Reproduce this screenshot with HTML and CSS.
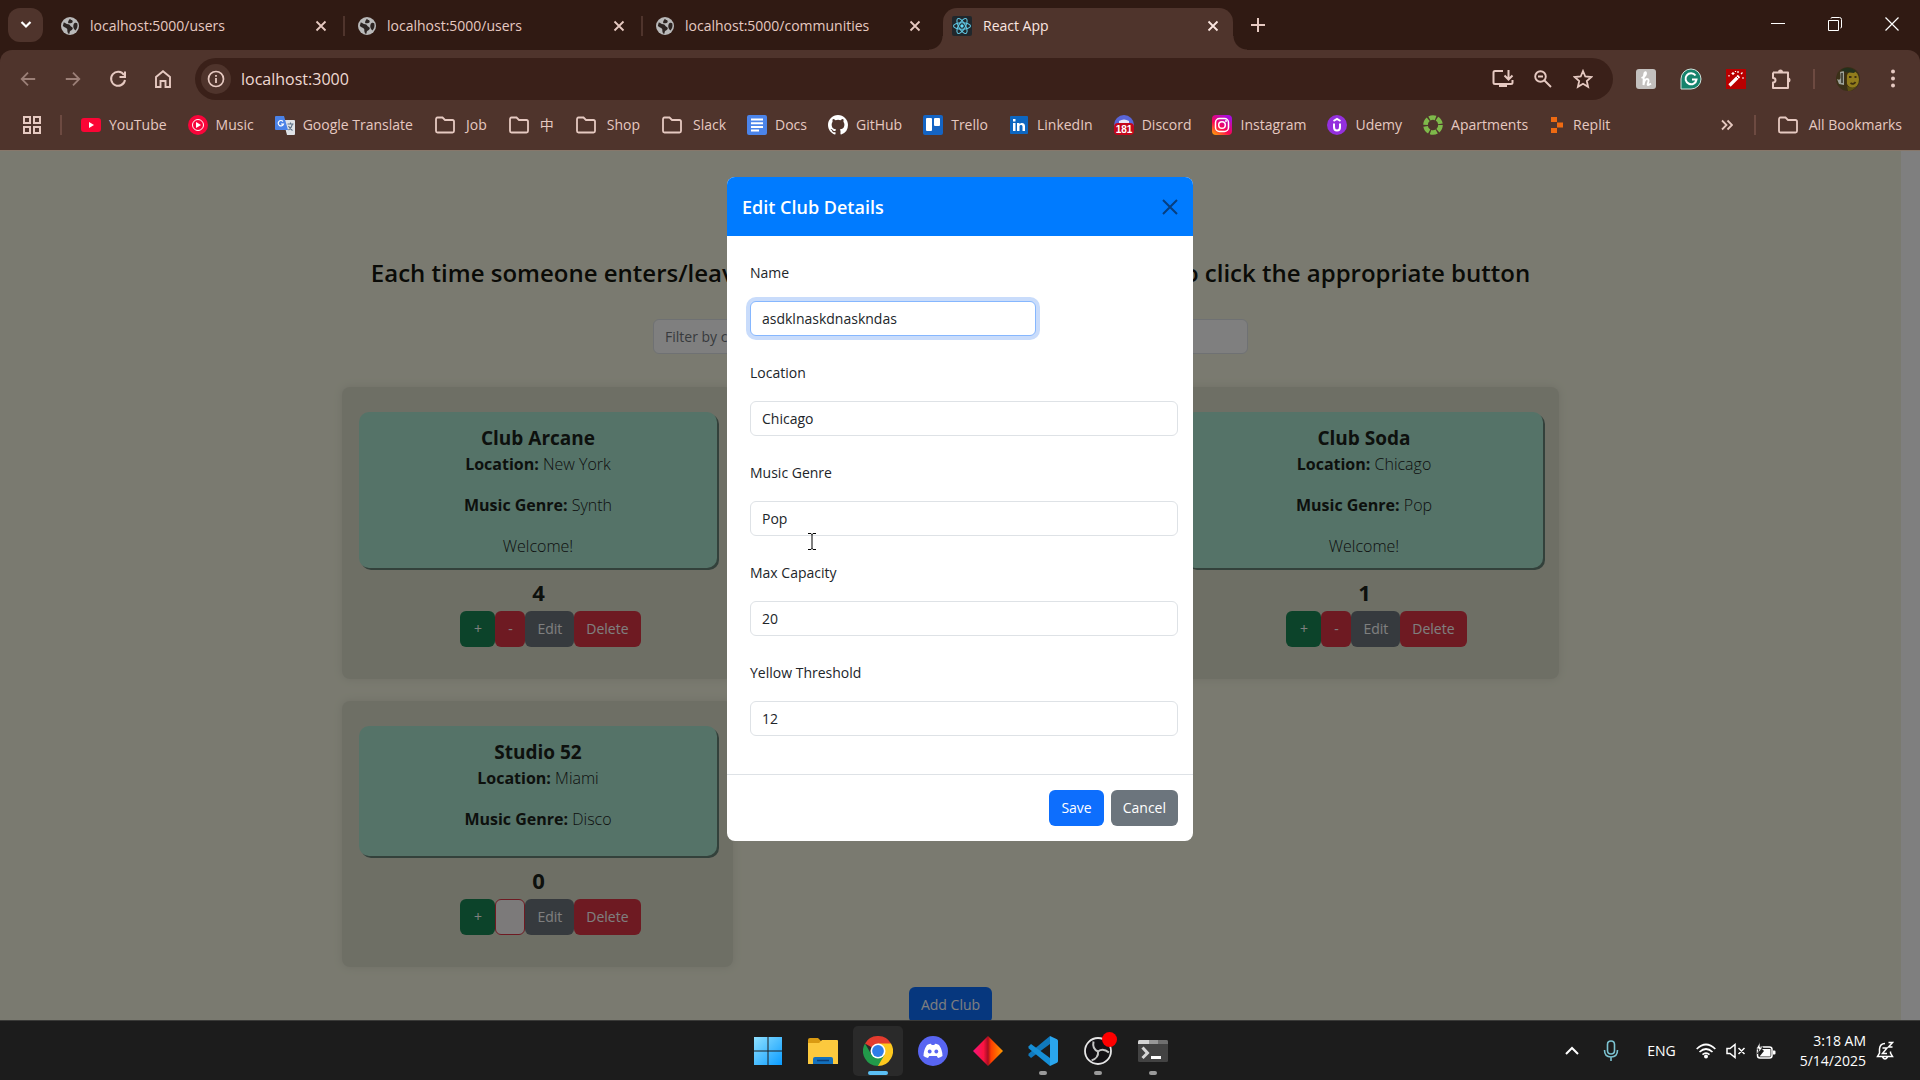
FILE: index.html
```html
<!DOCTYPE html>
<html lang="en">
<head>
<meta charset="utf-8">
<title>React App</title>
<link rel="stylesheet" href="styles.css">
</head>
<body>
<svg class="defs" aria-hidden="true">
  <symbol id="globe" viewBox="0 0 20 20"><circle cx="10" cy="10" r="10" fill="#b9b9b9"/><path d="M3 6c2 0 3 2 5 2s2 2 4 3 1 3-1 4-1 3-2 4c-2-1-2-3-2-5s-3-2-5-4zM10 2c1 2 3 1 3 3s-2 2-4 2-1-3 1-5zM14 8c1-2 3-2 4-1 1 3 0 6-2 8-2-2-3-4-2-7z" fill="#2c2422"/></symbol>
  <symbol id="close" viewBox="0 0 12 12"><path d="M1.500 1.500l9 9M10.500 1.500l-9 9" stroke="currentColor" stroke-width="1.800" fill="none"/></symbol>
  <symbol id="folder" viewBox="0 0 22 18"><path d="M2 3.500V15q0 1.500 1.500 1.500h15Q20 16.500 20 15V5.500Q20 4 18.500 4H11L8.500 1.500h-5Q2 1.500 2 3.500z" stroke="currentColor" stroke-width="1.800" fill="none"/></symbol>
  <symbol id="back" viewBox="0 0 20 20"><path d="M18 10H3M10 3l-7 7 7 7" stroke="currentColor" stroke-width="2" fill="none"/></symbol>
</svg>

<header class="browser">
  <div class="tabstrip">
    <button class="tab-search" aria-label="Search tabs"><svg width="12" height="10" viewBox="0 0 12 10"><path d="M1.500 2l4.500 4.500L10.500 2" stroke="currentColor" stroke-width="2.200" fill="none"/></svg></button>
    <div class="tab"><svg class="i18"><use href="#globe"/></svg><span>localhost:5000/users</span><button aria-label="Close tab"><svg class="i12"><use href="#close"/></svg></button></div>
    <div class="tab"><svg class="i18"><use href="#globe"/></svg><span>localhost:5000/users</span><button aria-label="Close tab"><svg class="i12"><use href="#close"/></svg></button></div>
    <div class="tab last"><svg class="i18"><use href="#globe"/></svg><span>localhost:5000/communities</span><button aria-label="Close tab"><svg class="i12"><use href="#close"/></svg></button></div>
    <div class="tab active"><svg class="i20" viewBox="0 0 20 20"><rect width="20" height="20" rx="2" fill="#20272c"/><g fill="none" stroke="#61c8e4" stroke-width="1.100"><ellipse cx="10" cy="10" rx="8.500" ry="3.300"/><ellipse cx="10" cy="10" rx="8.500" ry="3.300" transform="rotate(60 10 10)"/><ellipse cx="10" cy="10" rx="8.500" ry="3.300" transform="rotate(120 10 10)"/></g><circle cx="10" cy="10" r="1.700" fill="#61dafb"/></svg><span>React App</span><button aria-label="Close tab"><svg class="i12"><use href="#close"/></svg></button></div>
    <button class="new-tab" aria-label="New tab"><svg width="14" height="14" viewBox="0 0 14 14"><path d="M7 0v14M0 7h14" stroke="currentColor" stroke-width="2"/></svg></button>
    <div class="window-controls">
      <button aria-label="Minimize"><svg width="14" height="14" viewBox="0 0 14 14"><path d="M0 6.500h14" stroke="#fff"/></svg></button>
      <button aria-label="Restore"><svg width="14" height="14" viewBox="0 0 14 14"><path d="M.500 3.500h10v10H.500zM3 1.500Q3 .500 4 .500h7.500q2 0 2 2V10q0 1-1 1" stroke="#fff" fill="none"/></svg></button>
      <button aria-label="Close"><svg width="14" height="14" viewBox="0 0 14 14"><path d="M.500.500l13 13M13.500.500l-13 13" stroke="#fff" stroke-width="1.200"/></svg></button>
    </div>
  </div>

  <div class="toolbar">
    <nav class="nav-buttons">
      <button class="dim" aria-label="Back"><svg class="i18"><use href="#back"/></svg></button>
      <button class="dim" aria-label="Forward"><svg class="i18 flip"><use href="#back"/></svg></button>
      <button aria-label="Reload"><svg class="i18" viewBox="0 0 18 18"><path d="M15 5A7 7 0 1 0 16 10M16 1.500V7h-5.500" stroke="currentColor" stroke-width="2" fill="none"/></svg></button>
      <button aria-label="Home"><svg class="i18" viewBox="0 0 18 18"><path d="M2 7l7-5.800L16 7v10h-4.500v-6h-5v6H2z" stroke="currentColor" stroke-width="1.900" fill="none"/></svg></button>
    </nav>
    <div class="omnibox">
      <button class="site-info" aria-label="View site information"><svg class="i18" viewBox="0 0 18 18"><circle cx="9" cy="9" r="7.500" stroke="currentColor" stroke-width="1.700" fill="none"/><path d="M9 8v5M9 5v1.800" stroke="currentColor" stroke-width="1.800"/></svg></button>
      <input class="address" type="text" value="localhost:3000" aria-label="Address">
      <button aria-label="Install app"><svg width="22" height="20" viewBox="0 0 22 20"><path d="M11 2H3q-1.500 0-1.500 1.500v10Q1.500 15 3 15h16q1.500 0 1.500-1.500V11M16.500 1v9M12.500 6.500l4 4 4-4" stroke="currentColor" stroke-width="2" fill="none"/><path d="M7 15h8v3H7z" fill="currentColor"/></svg></button>
      <button aria-label="Zoom"><svg class="i18" viewBox="0 0 18 18"><circle cx="6.500" cy="6.500" r="5.300" stroke="currentColor" stroke-width="1.900" fill="none"/><path d="M10.500 10.500l6.500 6.500M4 6.500h5" stroke="currentColor" stroke-width="1.900"/></svg></button>
      <button aria-label="Bookmark this tab"><svg class="i20" viewBox="0 0 20 20"><path d="M10 2l2.300 5.500 6 .500-4.500 4 1.300 5.800L10 14.700l-5.100 3.100L6.200 12l-4.500-4 6-.500z" stroke="currentColor" stroke-width="1.800" fill="none"/></svg></button>
    </div>
    <div class="extensions">
      <button aria-label="Honey"><svg class="i22" viewBox="0 0 22 22"><rect x="1" y="1" width="20" height="20" rx="3" fill="#c3c0be"/><path d="M6.500 10Q11 8 11 5.500T9.500 5Q8.500 9 8.500 17q1-6 3.500-6t1 4 3 .500" stroke="#fff" stroke-width="1.900" fill="none"/></svg></button>
      <button aria-label="Grammarly"><svg class="i22" viewBox="0 0 22 22"><path d="M1 21V11A10 10 0 1 1 11 21z" fill="#15836c" stroke="#cfe3dc" stroke-width="1"/><path d="M15.500 7.500A5.500 5.500 0 1 0 16.500 11.500h-4.500" stroke="#fff" stroke-width="2" fill="none"/></svg></button>
      <button aria-label="Magic wand"><svg class="i22" viewBox="0 0 22 22"><path d="M1 1h20v20H1z" fill="#b90000"/><path d="M4.500 17.500l9.500-9.500" stroke="#fff" stroke-width="3.200"/><path d="M11.500 8.500l2 2" stroke="#b90000"/><path d="M8 4v3M6.500 5.500h3M13 3v2M17.500 4.500L16 6M17 10h2M4 7v1.500M10.500 3v1" stroke="#fff" stroke-width="1.200"/></svg></button>
      <button aria-label="Extensions"><svg class="i22" viewBox="0 0 22 22"><path d="M3 4.500h15V10M18 14v6H3v-5.500q2.500-.200 2.500-2.300T3 10V4.500" stroke="currentColor" stroke-width="2" fill="none" stroke-linejoin="round"/><path d="M8 4a2.500 2.500 0 0 1 5 0zM18 9.500a2.500 2.500 0 0 1 0 5z" fill="currentColor"/><path d="M18 9v6" stroke="currentColor" stroke-width="2"/></svg></button>
      <i class="rule"></i>
      <button aria-label="Profile"><svg class="i24" viewBox="0 0 24 24"><circle cx="12" cy="12" r="12" fill="#3b3018"/><path d="M4 5l4-1v14l-5-1-2-5q5 3 3-7z" fill="#9ea39a"/><path d="M6 6v10" stroke="#2c2c22" stroke-width="1.500"/><ellipse cx="16.500" cy="12.500" rx="6.500" ry="8.500" fill="#917c1c"/><path d="M5 3q7-5 15 1l-2 2-9-1z" fill="#24301c"/><path d="M13 10h2.500M18.500 10h2M14.500 16q3 2 5-1M10 6v13" stroke="#3e3010" stroke-width="1.800" fill="none"/><path d="M11 19q5 3 10 0-4 5-9 5z" fill="#5d5012"/></svg></button>
      <button aria-label="Menu"><svg class="i22" viewBox="0 0 22 22"><g fill="currentColor"><circle cx="11" cy="3.500" r="2"/><circle cx="11" cy="10.500" r="2"/><circle cx="11" cy="17.500" r="2"/></g></svg></button>
    </div>
  </div>

  <nav class="bookmarks">
    <button aria-label="Tab groups"><svg class="i18" viewBox="0 0 18 18"><path d="M1 1h6v6H1zM11 1h6v6h-6zM1 11h6v6H1zM11 11h6v6h-6z" stroke="currentColor" stroke-width="2" fill="none"/></svg></button>
    <i class="rule"></i>
    <div class="bookmark-list">
    <a href="#"><svg class="i20" viewBox="0 0 20 20"><rect y="3" width="20" height="14" rx="3" fill="#fb0535"/><path d="M8 7l5 3-5 3z" fill="#fff"/></svg>YouTube</a>
    <a href="#"><svg class="i20" viewBox="0 0 20 20"><circle cx="10" cy="10" r="10" fill="#f8053a"/><circle cx="10" cy="10" r="5.500" stroke="#fff" fill="none"/><path d="M8 7l5 3-5 3z" fill="#fff"/></svg>Music</a>
    <a href="#"><svg class="i20" viewBox="0 0 20 20"><path d="M8 5h11q1 0 1 1v13q0 1-1 1h-7z" fill="#dfe2e7"/><path d="M1 1h8l4 14H1q-1 0-1-1V2q0-1 1-1z" fill="#4a82e8"/><path d="M8 6.500A2.700 2.700 0 1 0 8.500 9H6" stroke="#fff" stroke-width="1.200" fill="none"/><path d="M12.500 9h6M15.500 7.500V9M17.500 9q-1 4-4 6M13.500 11q1.500 3 4 4.500" stroke="#5d7186" stroke-width="1.100" fill="none"/></svg>Google Translate</a>
    <a class="folder" href="#"><svg class="i22"><use href="#folder"/></svg>Job</a>
    <a class="folder" href="#"><svg class="i22"><use href="#folder"/></svg>中</a>
    <a class="folder" href="#"><svg class="i22"><use href="#folder"/></svg>Shop</a>
    <a class="folder" href="#"><svg class="i22"><use href="#folder"/></svg>Slack</a>
    <a href="#"><svg class="i20" viewBox="0 0 20 20"><rect width="20" height="20" rx="2" fill="#4b84ea"/><path d="M4 4.500h12M4 8.200h12M4 12h12M4 15.500h8" stroke="#fff" stroke-width="2"/></svg>Docs</a>
    <a href="#"><svg class="i20" viewBox="0 0 16 16"><path fill="#fff" d="M8 0C3.580 0 0 3.580 0 8c0 3.540 2.290 6.530 5.470 7.590.4.070.55-.17.55-.38 0-.19-.01-.82-.01-1.490-2.010.37-2.530-.49-2.690-.94-.09-.23-.48-.94-.82-1.130-.28-.15-.68-.52-.01-.53.63-.01 1.080.58 1.230.82.72 1.210 1.870.87 2.330.66.07-.52.28-.87.51-1.070-1.780-.2-3.640-.89-3.640-3.950 0-.87.31-1.590.82-2.150-.08-.2-.36-1.020.08-2.120 0 0 .67-.21 2.200.82a7.600 7.600 0 0 1 4 0c1.530-1.040 2.200-.82 2.200-.82.44 1.100.16 1.920.08 2.120.51.56.82 1.270.82 2.150 0 3.070-1.870 3.750-3.650 3.950.29.25.54.73.54 1.480 0 1.070-.01 1.930-.01 2.200 0 .21.15.46.55.38A8.010 8.010 0 0 0 16 8c0-4.420-3.580-8-8-8z"/></svg>GitHub</a>
    <a href="#"><svg class="i20" viewBox="0 0 20 20"><rect width="20" height="20" rx="2" fill="#1464c4"/><rect x="3" y="3" width="6" height="13" rx="1" fill="#fff"/><rect x="11" y="3" width="6" height="8" rx="1" fill="#fff"/></svg>Trello</a>
    <a href="#"><svg class="i20" viewBox="0 0 20 20"><rect x="1" y="1" width="18" height="18" rx="1" fill="#0d66c0"/><path d="M4 8h2.500v8H4zM4 4h2.500v2.500H4zM8 8h2.500v1.300C12 7 16 7.500 16 11v5h-2.500v-4.500c0-2-3-2-3 0V16H8z" fill="#fff"/></svg>LinkedIn</a>
    <a href="#"><svg class="i20" viewBox="0 0 20 20"><circle cx="10" cy="10" r="10" fill="#5965d8"/><path d="M5 6q5-3 10 0v4H5z" fill="#e9e7f5"/><rect y="8" width="20" height="12" rx="4" fill="#c4061b"/><text x="10" y="18" class="count-badge">181</text></svg>Discord</a>
    <a href="#"><svg class="i20" viewBox="0 0 20 20"><defs><linearGradient id="ig" x1="0" y1="1" x2=".7" y2="0"><stop offset="0" stop-color="#ffb400"/><stop offset=".45" stop-color="#fb0550"/><stop offset="1" stop-color="#a90dde"/></linearGradient></defs><rect width="20" height="20" rx="4" fill="url(#ig)"/><rect x="3.500" y="3.500" width="13" height="13" rx="4" stroke="#fff" stroke-width="1.500" fill="none"/><circle cx="10" cy="10" r="3.300" stroke="#fff" stroke-width="1.500" fill="none"/><circle cx="14" cy="6" r="1" fill="#fff"/></svg>Instagram</a>
    <a href="#"><svg class="i20" viewBox="0 0 20 20"><circle cx="10" cy="10" r="10" fill="#9430dd"/><path d="M6.500 6L10 4l3.500 2M7 8.500V12q0 3.500 3 3.500t3-3.500V8.500" stroke="#fff" stroke-width="2" fill="none"/></svg>Udemy</a>
    <a href="#"><svg class="i20" viewBox="0 0 20 20"><circle cx="10" cy="10" r="7.500" stroke="#7eb94a" stroke-width="4.600" stroke-dasharray="6.400 1.450" fill="none"/></svg>Apartments</a>
    <a href="#"><svg class="i16" viewBox="0 0 16 20"><path d="M2 2h6v5H2zM8 7.500h6v5H8zM2 13h6v5H2z" fill="#ef6a12"/></svg>Replit</a>
    </div>
    <div class="bookmarks-end">
      <button aria-label="More bookmarks"><svg class="i12" viewBox="0 0 12 12"><path d="M1 1.500L5.500 6 1 10.500M6.500 1.500L11 6l-4.500 4.500" stroke="currentColor" stroke-width="1.800" fill="none"/></svg></button>
      <i class="rule"></i>
      <a class="folder" href="#"><svg class="i22"><use href="#folder"/></svg>All Bookmarks</a>
    </div>
  </nav>
</header>

<div class="viewport">
  <main class="page">
    <h1>Each time someone enters/leaves one of the clubs, please remember to click the appropriate button</h1>
    <input class="field filter" type="text" placeholder="Filter by club name" aria-label="Filter clubs">
    <div class="clubs">
      <section class="club">
        <div class="info"><h2>Club Arcane</h2><p><b>Location:</b> New York</p><p><b>Music Genre:</b> Synth</p><p>Welcome!</p></div>
        <div class="count">4</div>
        <div class="actions"><button class="btn green">+</button><button class="btn red">-</button><button class="btn gray">Edit</button><button class="btn red">Delete</button></div>
      </section>
      <section class="club third">
        <div class="info"><h2>Club Soda</h2><p><b>Location:</b> Chicago</p><p><b>Music Genre:</b> Pop</p><p>Welcome!</p></div>
        <div class="count">1</div>
        <div class="actions"><button class="btn green">+</button><button class="btn red">-</button><button class="btn gray">Edit</button><button class="btn red">Delete</button></div>
      </section>
      <section class="club">
        <div class="info"><h2>Studio 52</h2><p><b>Location:</b> Miami</p><p><b>Music Genre:</b> Disco</p></div>
        <div class="count">0</div>
        <div class="actions"><button class="btn green">+</button><button class="btn blank" aria-label="Remove one"></button><button class="btn gray">Edit</button><button class="btn red">Delete</button></div>
      </section>
    </div>
    <button class="btn blue">Add Club</button>
  </main>
  <div class="scrollbar"></div>

  <div class="backdrop">
    <form class="modal" role="dialog" aria-labelledby="modal-title">
      <header class="modal-header"><h2 id="modal-title">Edit Club Details</h2><button type="button" aria-label="Close"><svg class="i16" viewBox="0 0 16 16"><path d="M1 1l14 14M15 1L1 15" stroke="#063f80" stroke-width="2"/></svg></button></header>
      <div class="modal-body">
        <label for="name">Name</label><input id="name" class="field focused" type="text" value="asdklnaskdnaskndas">
        <label for="location">Location</label><input id="location" class="field" type="text" value="Chicago">
        <label for="genre">Music Genre</label><input id="genre" class="field" type="text" value="Pop">
        <label for="capacity">Max Capacity</label><input id="capacity" class="field" type="text" value="20">
        <label for="threshold">Yellow Threshold</label><input id="threshold" class="field" type="text" value="12">
      </div>
      <footer class="modal-footer"><button type="button" class="btn blue">Save</button><button type="button" class="btn gray">Cancel</button></footer>
    </form>
  </div>
  <svg class="cursor" width="8" height="17" viewBox="0 0 8 17"><path d="M0 .500h3l1 1 1-1h3M0 16.500h3l1-1 1 1h3M4 1v15" stroke="#000" fill="none"/></svg>
</div>

<footer class="taskbar">
  <div class="apps">
    <button aria-label="Start"><svg class="i30" viewBox="0 0 30 30"><defs><linearGradient id="win" x2="1" y2="1"><stop stop-color="#8fe0ff"/><stop offset="1" stop-color="#0a9cff"/></linearGradient></defs><path d="M1 1h13.500v13.500H1zM15.500 1H29v13.500H15.500zM1 15.500h13.500V29H1zM15.500 15.500H29V29H15.500z" fill="url(#win)"/></svg></button>
    <button aria-label="File Explorer"><svg class="i30" viewBox="0 0 30 30"><path d="M0 4q0-2 2-2h8l3 3v6H0z" fill="#d99a12"/><path d="M0 7h11l3-3h15q1 0 1 1v23H0z" fill="#fcc93e"/><path d="M5 28v-5q0-2 2-2h16q2 0 2 2v5z" fill="#1370bd"/><path d="M9 24.500h12" stroke="#0b3d76" stroke-width="1.500"/></svg></button>
    <button class="current" aria-label="Chrome"><svg class="i30" viewBox="0 0 30 30"><path d="M15 15L2 7.500A15 15 0 0 1 28 7.500z" fill="#e33b2e"/><path d="M15 15V7.500h13A15 15 0 0 1 15 30z" fill="#fdc81e"/><path d="M2 7.500A15 15 0 0 0 15 30l6.500-11.200H8.500z" fill="#229a4a"/><circle cx="15" cy="15" r="7.500" fill="#fff"/><circle cx="15" cy="15" r="5.900" fill="#2f7de8"/></svg><i class="bar"></i></button>
    <button aria-label="Discord"><svg class="i30" viewBox="0 0 30 30"><circle cx="15" cy="15" r="15" fill="#5865f2"/><path d="M9 9q2.500-1.200 4-1.200l.700 1.200h2.600l.700-1.200q1.500 0 4 1.200 3.500 5 3.500 11-2 1.500-4.500 2l-1.200-2h-7.600l-1.200 2q-2.500-.500-4.500-2Q5.500 14 9 9z" fill="#fff"/><circle cx="11.700" cy="15.500" r="1.900" fill="#5865f2"/><circle cx="18.300" cy="15.500" r="1.900" fill="#5865f2"/></svg></button>
    <button aria-label="Diamond app"><svg class="i30" viewBox="0 0 30 30"><defs><linearGradient id="dia"><stop stop-color="#f5147d"/><stop offset=".35" stop-color="#fb1440"/><stop offset=".5" stop-color="#a80d22"/><stop offset=".6" stop-color="#ff3d00"/><stop offset="1" stop-color="#ff9a00"/></linearGradient></defs><path d="M15 0l15 15-15 15L0 15z" fill="url(#dia)"/></svg></button>
    <button aria-label="Visual Studio Code"><svg class="i30" viewBox="0 0 30 30"><path d="M22 8L3 22l-2.500-2.500v-1.800L22 0z" fill="#1079bd"/><path d="M22 22L3 8 .500 10.500v1.800L22 30z" fill="#168fd6"/><path d="M22 0l7 3.300q1 .500 1 1.700v20q0 1.200-1 1.700L22 30z" fill="#2aa6ee"/></svg><i class="dot"></i></button>
    <button aria-label="OBS Studio"><svg class="i30" viewBox="0 0 30 30"><circle cx="15" cy="15" r="13" fill="#131115" stroke="#e6e6e6" stroke-width="1.800"/><g fill="none" stroke="#c4c4c4" stroke-width="2"><path d="M15 15.500Q9 13 10.500 5.500"/><path d="M15 15.500Q9 13 10.500 5.500" transform="rotate(120 15 15.500)"/><path d="M15 15.500Q9 13 10.500 5.500" transform="rotate(240 15 15.500)"/></g></svg><i class="dot"></i><i class="badge"></i></button>
    <button aria-label="Terminal"><svg class="i30" viewBox="0 0 30 30"><rect y="4" width="30" height="22" rx="1.500" fill="#434343"/><path d="M0 8V5.500Q0 4 1.500 4H11v4z" fill="#d5d5d5"/><path d="M11 4h9v4h-9z" fill="#989898"/><path d="M20 4h8.500q1.500 0 1.500 1.500V8H20z" fill="#6f6f6f"/><path d="M4.500 11.500L9.500 17l-5 5" stroke="#d6d6d6" stroke-width="3" fill="none"/><path d="M13 21.500h10" stroke="#fff" stroke-width="3"/></svg><i class="dot"></i></button>
  </div>
  <div class="tray">
    <svg width="14" height="10" viewBox="0 0 14 10"><path d="M1 8l6-6 6 6" stroke="#fff" stroke-width="2" fill="none"/></svg>
    <svg class="mic" width="16" height="22" viewBox="0 0 16 22"><path d="M8 1q3.500 0 3.500 3.500v6q0 3.500-3.500 3.500t-3.500-3.500v-6Q4.500 1 8 1zM1.500 10q0 7 6.500 7t6.500-7M8 17v4" stroke="#7cc3d1" stroke-width="1.600" fill="none"/></svg>
    <span class="lang">ENG</span>
    <div class="status">
      <svg width="20" height="16" viewBox="0 0 20 16"><g stroke="#fff" stroke-width="1.700" fill="none"><path d="M.700 6q9.300-9 18.600 0M3.500 9q6.500-6 13 0M6.500 11.700q3.500-3 7 0"/></g><circle cx="10" cy="13.500" r="2" fill="#fff"/></svg>
      <svg width="20" height="16" viewBox="0 0 20 16"><path d="M1 5.500h3L9 1.500v13L4 10.500H1zM12.500 5l6 6M18.500 5l-6 6" stroke="#fff" stroke-width="1.500" fill="none"/></svg>
      <svg width="20" height="18" viewBox="0 0 20 18"><rect x="1.500" y="5" width="14.500" height="11" rx="2.500" stroke="#fff" stroke-width="1.500" fill="none"/><path d="M6 7h8.500v7.500H3.500L8 9zM17 8.500h1.500q1 0 1 1v2q0 1-1 1H17z" fill="#fff"/><path d="M4 0L0 7h3L1.500 12 7 5H4z" fill="#fff" stroke="#1c1c1c" stroke-width=".8"/></svg>
    </div>
    <div class="clock"><span>3:18 AM</span><span>5/14/2025</span></div>
    <svg width="18" height="20" viewBox="0 0 18 20"><path d="M9 2.500q-5 0-5.500 5.500v4L1.500 15.500h15l-2-3.500v-1.500M6.500 16q2.500 4 5 0" stroke="#fff" stroke-width="1.500" fill="none"/><path d="M6.500 7h4.500l-4.500 5.500H11M12.500 1.500h4L12.500 6h4" stroke="#fff" stroke-width="1.500" fill="none"/></svg>
  </div>
</footer>
</body>
</html>
```
FILE: styles.css
```css
* { box-sizing: border-box; margin: 0; padding: 0; }

body {
  display: flex;
  flex-direction: column;
  height: 100vh;
  overflow: hidden;
  font: 14px/24px "Open Sans", "Noto Sans CJK SC", sans-serif;
  color: #212529;
}

button, input { font: inherit; color: inherit; border: 0; background: none; }
button { display: flex; align-items: center; justify-content: center; flex: none; }
a { color: inherit; text-decoration: none; }
svg { display: block; flex: none; }

.defs { position: absolute; width: 0; height: 0; }
.i12 { width: 12px; height: 12px; }
.i16 { width: 16px; height: 20px; }
.i18 { width: 18px; height: 18px; }
.i20 { width: 20px; height: 20px; }
.i22 { width: 22px; height: 22px; }
.i24 { width: 24px; height: 24px; }
.i30 { width: 30px; height: 30px; }
.flip { transform: scaleX(-1); }

/* Browser chrome */
.browser { flex: none; background: #301a13; color: #e6c9c1; }
.tabstrip { display: flex; height: 50px; padding-left: 8px; }
.tab-search { width: 35px; height: 34px; margin-top: 8px; border-radius: 12px; background: #4f342c; color: #fff; }
.tab { position: relative; display: flex; align-items: center; gap: 11px; width: 298px; height: 34px; margin-top: 9px; padding: 0 16px 0 15px; }
.tab span { flex: 1; white-space: nowrap; }
.tab::after { content: ""; position: absolute; right: -2px; top: 7px; width: 2px; height: 20px; background: #4f342c; }
.tab-search + .tab { width: 300px; padding-left: 18px; }
.tab.last { width: 302px; padding-right: 22px; }
.tab.last::after { display: none; }
.tab.active { width: 290px; height: 42px; margin-top: 8px; padding: 0 14px 6px 9px; gap: 11px; border-radius: 14px 14px 0 0; background: #4f342c; color: #fbe6e0; }
.tab.active::before, .tab.active::after { content: ""; position: absolute; top: auto; bottom: 0; width: 14px; height: 14px; }
.tab.active::before { left: -14px; background: radial-gradient(circle at 0 0, #301a13 13px, #4f342c 14px); }
.tab.active::after { right: -14px; background: radial-gradient(circle at 100% 0, #301a13 13px, #4f342c 14px); }
.new-tab { width: 50px; height: 34px; margin-top: 8px; }
.window-controls { display: flex; margin-left: auto; }
.window-controls button { width: 57px; height: 48px; }
.toolbar { display: flex; align-items: center; height: 58px; padding: 0 5px; border-radius: 12px 12px 0 0; background: #4f342c; }
.nav-buttons { display: flex; }
.nav-buttons button { width: 45px; height: 40px; }
.dim { opacity: .5; }
.omnibox { display: flex; align-items: center; flex: 1; height: 42px; margin-left: 10px; padding: 0 10px 0 6px; border-radius: 21px; background: #3a2019; }
.omnibox button { width: 40px; height: 30px; }
.omnibox .site-info { width: 30px; border-radius: 15px; background: #4f342c; }
.address { flex: 1; padding: 0 10px; font-size: 16px; color: #f0dad3; }
.extensions { display: flex; align-items: center; margin-left: 10px; }
.extensions button { width: 45px; height: 30px; }
.extensions .rule { margin: 0 10px; }
.rule { flex: none; width: 2px; height: 20px; background: #6d4a41; }
.bookmarks { display: flex; align-items: center; gap: 19px; height: 43px; padding: 0 18px 9px 23px; border-bottom: 1px solid #87776a; background: #4f342c; }
.bookmark-list { display: flex; gap: 21px; }
.bookmarks a { display: flex; align-items: center; gap: 8px; white-space: nowrap; line-height: 20px; }
.bookmarks .folder { gap: 10px; }
.bookmarks-end { display: flex; align-items: center; gap: 21px; margin-left: auto; }
.count-badge { font: bold 10px "Liberation Sans", sans-serif; fill: #fff; text-anchor: middle; }

/* Page */
.viewport { position: relative; display: flex; flex: 1; min-height: 0; overflow: hidden; }
.page { display: flex; flex-direction: column; align-items: center; flex: 1; min-width: 0; padding-top: 104px; background: #f4f5e0; }
.page h1 { font-size: 24px; line-height: 36px; font-weight: 600; color: #14160f; white-space: nowrap; }
.scrollbar { width: 19px; background: #fff; }
.field { height: 35px; padding: 0 11px; border: 1px solid #dee2e6; border-radius: 6px; background: #fff; }
.field::placeholder { color: #70757a; }
.filter { width: 595px; flex: none; margin: 28px 0 33px; }
.clubs { display: grid; grid-template-columns: repeat(3, 391px); gap: 22px; margin-bottom: 20px; }
.club { padding: 25px 15px 32px 17px; border-radius: 8px; background: #dddecb; box-shadow: 0 0 8px #dddecb; text-align: center; font-size: 16px; color: #1b221b; }
.third { grid-column: 3; }
.info { min-height: 130px; padding: 12px 10px 9px; margin-right: 1px; border-radius: 10px; background: #aae6d0; box-shadow: 2px 2px 0 #678277; }
.info h2 { font-size: 19px; line-height: 28px; font-weight: 700; }
.info p { line-height: 25px; margin-bottom: 16px; font-weight: 300; }
.info p:last-child { margin-bottom: 0; }
.info b { font-weight: 700; }
.count { margin-top: 8px; font-size: 22px; line-height: 32px; font-weight: 700; }
.actions { display: flex; justify-content: center; padding: 3px 0 0 24px; }
.btn { min-width: 30px; height: 36px; padding: 0 11px; border: 1px solid transparent; border-radius: 6px; font-size: 14px; color: #fff; }
.green { min-width: 35px; background: #198754; }
.red { background: #dc3545; }
.gray { background: #6c757d; }
.blue { background: #0d6efd; }
.blank { background: #f8f4f4; border-color: #dc3545; }

/* Modal */
.backdrop { position: absolute; inset: 0; display: flex; justify-content: center; align-items: flex-start; padding-top: 26px; background: rgba(0, 0, 0, .5); }
.modal { width: 466px; border-radius: 8px; overflow: hidden; background: #fff; }
.modal-header { display: flex; align-items: center; justify-content: space-between; height: 59px; padding: 0 15px; background: #007bff; color: #fff; }
.modal-header h2 { font-size: 18px; font-weight: 600; }
.modal-body { display: flex; flex-direction: column; padding: 25px 15px 13px 23px; border-bottom: 1px solid #dee2e6; }
.modal-body label { align-self: flex-start; margin-bottom: 16px; }
.modal-body .field { margin-bottom: 25px; }
.modal-body .focused { width: 286px; border-color: #86b7fe; box-shadow: 0 0 0 4px #c9dcfb; }
.modal-footer { display: flex; justify-content: flex-end; gap: 7px; padding: 15px; }
.cursor { position: absolute; left: 808px; top: 382px; }

/* Taskbar */
.taskbar { display: grid; grid-template-columns: 1fr auto 1fr; align-items: center; flex: none; height: 60px; border-top: 1px solid #3a3a38; background: #1c1c1c; color: #fff; }
.apps { grid-column: 2; display: flex; gap: 5px; }
.apps button { position: relative; width: 50px; height: 50px; border-radius: 5px; }
.apps .current { background: #2a2a2a; }
.bar, .dot, .badge { position: absolute; border-radius: 4px; }
.bar { bottom: 1px; width: 20px; height: 4px; background: #5bc0f5; }
.dot { bottom: 1px; width: 8px; height: 4px; background: #9a9a9a; }
.badge { top: 6px; right: 6px; width: 15px; height: 15px; border-radius: 8px; background: #f00; }
.tray { display: flex; align-items: center; justify-content: flex-end; padding-right: 26px; }
.mic { margin: 0 28px 0 24px; }
.lang { margin-right: 20px; }
.status { display: flex; align-items: center; gap: 10px; margin-right: 24px; }
.clock { display: flex; flex-direction: column; align-items: flex-end; margin-right: 10px; line-height: 20px; }
```
